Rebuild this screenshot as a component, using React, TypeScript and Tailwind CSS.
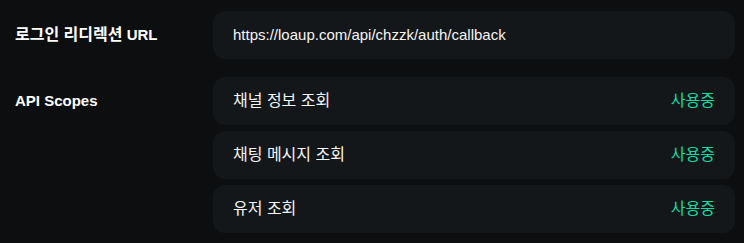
const SCOPES = ["채널 정보 조회", "채팅 메시지 조회", "유저 조회"];

const font = "font-['Liberation_Sans','Noto_Sans_CJK_KR',sans-serif]";

// Hangul in the reference runs a touch wider than Noto CJK at the same size
function Ko({ children }: { children: string }) {
  return <span className="text-[16px]">{children}</span>;
}

export default function App() {
  return (
    <div className={`min-h-screen w-full bg-[#0c0e10] pt-[11px] pl-[15px] pr-[9px] ${font}`}>
      <div className="flex flex-col gap-[18px]">
        <div className="flex items-center">
          <div className="w-[198px] shrink-0 text-[15px] font-bold text-white">
            <Ko>로그인 리디렉션</Ko> URL
          </div>
          <div className="flex h-[48px] flex-1 items-center rounded-xl bg-[#141719] px-5 text-[15px] text-[#f5f5f5]">
            https://loaup.com/api/chzzk/auth/callback
          </div>
        </div>

        <div className="flex items-start">
          <div className="flex h-[48px] w-[198px] shrink-0 items-center text-[15px] font-bold text-white">
            API Scopes
          </div>
          <div className="flex flex-1 flex-col gap-[6px]">
            {SCOPES.map((s) => (
              <div
                key={s}
                className="flex h-[48px] items-center justify-between rounded-xl bg-[#141719] px-5 text-[16px]"
              >
                <span className="text-[#f5f5f5]">{s}</span>
                <span className="text-[#12dca2]">사용중</span>
              </div>
            ))}
          </div>
        </div>
      </div>
    </div>
  );
}
